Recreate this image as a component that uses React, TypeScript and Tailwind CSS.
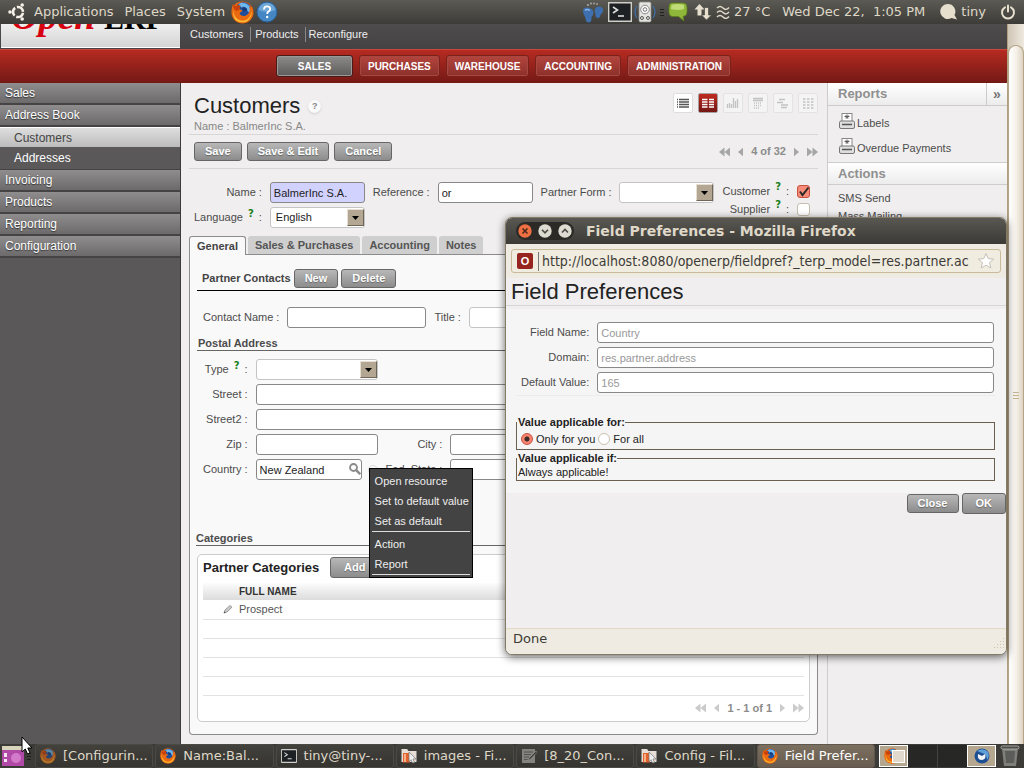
import React from "react";

const inputBase =
  "h-[21px] min-w-0 rounded-[3px] border border-[#888] bg-white px-[3px] text-[11px] text-[#222] outline-none";
const greyButton =
  "h-[19px] rounded-[3px] border border-[#666] bg-linear-to-b from-[#b8b8b8] to-[#8c8c8c] px-2.5 text-[11px] leading-[17px] font-bold text-white text-shadow-[0_1px_1px_#666] whitespace-nowrap";

function Firefox({ className = "size-4", dim = false }: { className?: string; dim?: boolean }) {
  return (
    <svg viewBox="0 0 24 24" className={`${className} shrink-0 ${dim ? "opacity-60" : ""}`} aria-hidden="true">
      <circle cx="12" cy="12" r="11.500" fill="#e8640f" />
      <circle cx="13" cy="9.500" r="8.200" fill="#1f4f9c" />
      <path d="M8 3 Q14 0 19 5 Q21 9 20 13 Q17 11 16 8 Q12 8 10 6 Z" fill="#6cb8ee" />
      <path d="M12 6 Q16 6 17 9 L14 11 Q11 9 12 6Z" fill="#163a78" />
      <path
        d="M2 3 Q3 5.500 5 5.500 Q7 4 10 5 Q8 7 9 8.500 Q11 8.500 12 10.500 Q9 11.500 9 13.500 Q11 16.500 15 15.500 Q19 13.500 19.500 9 L19 6 Q21 7 22 6 Q24 12 21.500 17 Q18 22 12 23 Q3 22 1 14 Q0 8 2 3Z"
        fill="#ea6a12"
      />
      <path d="M3 9 Q2 15 7 19 Q12 22 17 19 Q21 16 21.500 10 Q22.500 17 17 21 Q11 24 5 20 Q1 15 3 9Z" fill="#fcbc33" />
      <path d="M2 3 Q3 5.500 5 5.500 Q7 4 10 5 Q8 7 9 8.500 Q7 11 5 10 Q2 8 2 3Z" fill="#c9400b" />
    </svg>
  );
}

function UbuntuLogo() {
  return (
    <svg viewBox="0 0 18 18" className="size-[18px]" aria-hidden="true">
      <circle cx="10" cy="9" r="5" fill="none" stroke="#f5f1e8" strokeWidth="2.6" strokeDasharray="8.6 1.87" strokeDashoffset="-0.9" />
      <circle cx="2" cy="9" r="1.8" fill="#f5f1e8" />
      <circle cx="14.2" cy="2" r="1.8" fill="#f5f1e8" />
      <circle cx="14.2" cy="16" r="1.8" fill="#f5f1e8" />
    </svg>
  );
}

function HelpBall() {
  return (
    <svg viewBox="0 0 22 22" className="size-[22px]" aria-hidden="true">
      <circle cx="11" cy="11" r="10" fill="#4586c4" stroke="#2b5f96" />
      <path d="M2.5 9 A8.6 8.6 0 0 1 19.5 9 Q11 13 2.5 9Z" fill="#6ea6d8" />
      <path d="M8 8.4 Q8 5.4 11 5.4 Q14.2 5.4 14.2 8 Q14.2 9.6 12.4 10.6 Q11.2 11.4 11.2 13" fill="none" stroke="#fff" strokeWidth="1.8" />
      <circle cx="11.2" cy="16" r="1.2" fill="#fff" />
    </svg>
  );
}

function Feet() {
  return (
    <svg viewBox="0 0 22 22" className="size-[22px]" aria-hidden="true">
      <g fill="#3e6fae">
        <path d="M1 10 Q1 6.500 5 6.500 Q11 7 11.500 11 Q11.500 14 9.500 16 Q10 21.500 6.500 21.500 Q3.500 21 3.500 17 Q1 13 1 10Z" />
        <path d="M13 8 Q14 5 17 5.500 Q21.500 6 21 10 Q20.500 12 18.500 13.500 Q18 17.500 15.500 17 Q13 16.500 13.500 13 Q12 10 13 8Z" />
      </g>
      <path d="M3 9.500 Q5 7.500 8 9.500" stroke="#8db4e2" strokeWidth="1.500" fill="none" />
      <g fill="#a9a9a4">
        <circle cx="6" cy="4" r="1.1" /><circle cx="9" cy="2.500" r="1" /><circle cx="12" cy="2.500" r="0.900" /><circle cx="15" cy="3" r="0.900" />
      </g>
    </svg>
  );
}

function Terminal({ className = "h-5 w-6" }: { className?: string }) {
  return (
    <svg viewBox="0 0 24 20" className={`${className} shrink-0`} aria-hidden="true">
      <rect x="0.500" y="0.500" width="23" height="19" rx="1" fill="#1d2124" stroke="#cfcfca" strokeWidth="1.800" />
      <path d="M5 5 L9.500 8 L5 11" fill="none" stroke="#ddd" strokeWidth="1.600" />
      <path d="M10 14 H16" stroke="#ddd" strokeWidth="1.600" />
    </svg>
  );
}

function Disk() {
  return (
    <svg viewBox="0 0 22 22" className="size-[22px]" aria-hidden="true">
      <path d="M3 5 Q-1 11 3 17 M19 5 Q23 11 19 17" stroke="#3f6da5" strokeWidth="1.300" fill="none" />
      <rect x="5" y="1" width="12" height="20" rx="1.500" fill="#e4e4e0" stroke="#8c8c88" strokeWidth="0.800" />
      <circle cx="11" cy="8.500" r="4.300" fill="#f8f8f8" stroke="#888" />
      <circle cx="11" cy="8.500" r="1.800" fill="#fff" stroke="#777" />
      <circle cx="8" cy="17" r="1.500" fill="none" stroke="#555" /><circle cx="14" cy="17" r="1.500" fill="none" stroke="#555" />
    </svg>
  );
}

function Grip() {
  return (
    <span className="flex flex-col gap-0.5" aria-hidden="true">
      <i className="h-px w-1 bg-[#22211f]" /><i className="h-px w-1 bg-[#22211f]" /><i className="h-px w-1 bg-[#22211f]" />
    </span>
  );
}

function TopBar() {
  return (
    <header className="flex h-6 shrink-0 items-center bg-linear-to-b from-[#5b5a54] to-[#3d3c38] pr-2 pl-2 font-['DejaVu_Sans',sans-serif] text-[13px] whitespace-nowrap text-[#dfd8c8]">
      <UbuntuLogo />
      <nav className="ml-2 flex gap-[11px] leading-[22px]">
        <a href="#apps">Applications</a>
        <a href="#places">Places</a>
        <a href="#system">System</a>
      </nav>
      <span className="ml-1.5 flex items-center gap-0.5">
        <Firefox className="size-[23px]" />
        <HelpBall />
      </span>
      <div className="ml-auto flex items-center leading-[22px]">
        <Feet />
        <span className="ml-1 flex"><Terminal /></span>
        <span className="ml-0.5 flex"><Disk /></span>
        <span className="ml-1"><Grip /></span>
        <svg viewBox="0 0 20 20" className="ml-1 size-5" aria-hidden="true">
          <path d="M4 1 H15 Q19 1 19 5 V10 Q19 14 15 14.500 L16 19 L10.500 14.500 H4 Q1 14 1 10 V5 Q1 1 4 1Z" fill="#8fb83a" stroke="#5c7f1c" strokeWidth="0.800" />
          <path d="M3.500 3 Q10 1 16 3 V7 Q10 9 3 7Z" fill="#bfdc78" />
        </svg>
        <svg viewBox="0 0 18 18" className="ml-1.5 size-[18px]" aria-hidden="true">
          <path d="M5.500 1 L10.500 6.500 H7.500 V12.500 H3.500 V6.500 H0.500Z" fill="#e6dfce" />
          <path d="M12.500 17 L7.500 12 H10.500 V4.500 H14.500 V12 H17.500Z" fill="#e6dfce" stroke="#4c4b46" strokeWidth="0.700" />
        </svg>
        <svg viewBox="0 0 14 14" className="ml-1 size-3.5" fill="none" stroke="#dfd8c8" strokeWidth="1.500" aria-hidden="true">
          <path d="M1 3 Q4 0 7 3 T13 2.500 M1 7.500 Q4 4.500 7 7.500 T13 7 M1 12 Q4 9 7 12 T13 11.500" />
        </svg>
        <span className="ml-1">27 °C</span>
        <span className="ml-3 whitespace-pre">Wed Dec 22,  1:05 PM</span>
        <svg viewBox="0 0 18 18" className="ml-3.5 size-[18px]" aria-hidden="true">
          <path d="M8.500 1 A7.500 7.500 0 1 0 12.500 15 L18 16.500 L15.500 12 A7.500 7.500 0 0 0 8.500 1Z" fill="#e6dfce" />
        </svg>
        <span className="ml-1">tiny</span>
        <svg viewBox="0 0 16 16" className="ml-3.5 size-4" fill="none" stroke="#e6dfce" strokeWidth="2" strokeLinecap="round" aria-hidden="true">
          <path d="M5 3.300 A6 6 0 1 0 11 3.300 M8 1.500 V7.500" />
        </svg>
      </div>
    </header>
  );
}

function AppHeader() {
  return (
    <>
      <div className="flex h-[25px] shrink-0 bg-linear-to-b from-[#4e4c4d] to-[#444243]">
        <div className="ml-px h-[24px] w-[179px] overflow-hidden border-b border-white bg-linear-to-b from-[#efefef] to-[#d4d4d4] pl-2.5 font-['Liberation_Serif',serif]">
          <div className="-mt-[27px] flex items-baseline leading-[38px] font-bold">
            <span className="w-[93px] text-[38px] text-[#d8000f] italic">Open</span>
            <span className="text-[30px] text-black">ERP</span>
          </div>
        </div>
        <nav className="flex items-start pt-[3px] pl-0.5 text-[11px] leading-[15px] text-[#eee]">
          <a href="#customers" className="pr-[7px] pl-2">Customers</a>
          <a href="#products" className="border-l border-[#888] pr-1.5 pl-1">Products</a>
          <a href="#reconfigure" className="border-l border-[#888] px-[3px]">Reconfigure</a>
        </nav>
      </div>
      <nav className="flex h-[34px] shrink-0 items-start justify-center gap-1.5 border-t border-[#c9483d] bg-linear-to-b from-[#b62b21] to-[#741915] pt-[5px] text-[10px] font-bold text-white text-shadow-[0_1px_1px_#300]">
        <button className="h-[22px] w-[77px] rounded-[3px] border border-[#4b1a17] bg-linear-to-b from-[#8e8b8b] to-[#5e5b5b] inset-shadow-[0_0_0_1px_#999]">SALES</button>
        {["PURCHASES", "WAREHOUSE", "ACCOUNTING", "ADMINISTRATION"].map((t) => (
          <button key={t} className="h-[22px] rounded-[3px] border border-[#7b211c] bg-linear-to-b from-[#b3453d] to-[#8c302b] px-2 inset-shadow-[0_0_0_1px_#a84740]">
            {t}
          </button>
        ))}
      </nav>
    </>
  );
}

const menuItem =
  "flex h-[22px] items-center border-b-2 border-[#454344] bg-linear-to-b from-[#8f8d8e] to-[#6c6a6b] pl-[5px] text-white text-shadow-[0_1px_1px_#333]";

function Sidebar() {
  return (
    <nav className="flex w-[181px] shrink-0 flex-col border-r border-[#3c3a3b] bg-[#5a5859] text-[12px]">
      <a href="#sales" className={menuItem}>Sales</a>
      <a href="#book" className={menuItem}>Address Book</a>
      <a href="#customers" className="flex h-5 items-center border-t border-white bg-linear-to-b from-[#dedede] to-[#bcbcbc] pl-3.5 text-[#444]">Customers</a>
      <a href="#addresses" className="flex h-[23px] items-center border-b border-[#454344] pl-3.5 text-white">Addresses</a>
      {["Invoicing", "Products", "Reporting", "Configuration"].map((t) => (
        <a key={t} href={`#${t}`} className={menuItem}>{t}</a>
      ))}
    </nav>
  );
}

function Label({ htmlFor, children, help = false }: { htmlFor: string; children: React.ReactNode; help?: boolean }) {
  return (
    <label htmlFor={htmlFor} className="flex items-center justify-end gap-[3px] text-[11px] leading-[15px] whitespace-nowrap text-[#4c4c4c]">
      {children}
      {help && <span className="mx-0.5 pb-2 font-['DejaVu_Sans',sans-serif] text-[10px] leading-[10px] font-bold text-[#1a7f1a]">?</span>}
      <span>:</span>
    </label>
  );
}

function Select({ id, value = "", className = "" }: { id: string; value?: string; className?: string }) {
  return (
    <div className={`relative h-[21px] min-w-0 ${className}`}>
      <select id={id} defaultValue={value} className="block h-[21px] w-full appearance-none rounded-[3px] border border-[#c4c4c4] bg-white px-[5px] text-[11px] text-[#222]">
        <option>{value}</option>
      </select>
      <span className="pointer-events-none absolute top-0.5 right-px flex size-[17px] items-center justify-center border border-t-[#e6dfd2] border-r-[#6f6557] border-b-[#6f6557] border-l-[#e6dfd2] bg-[#b3a692]" aria-hidden="true">
        <svg viewBox="0 0 7 4" className="h-1 w-[7px]"><path d="M0 0 H7 L3.500 4Z" fill="#000" /></svg>
      </span>
    </div>
  );
}

function Check({ id, checked = false }: { id: string; checked?: boolean }) {
  return (
    <span className="relative size-[13px]">
      <input
        id={id}
        type="checkbox"
        defaultChecked={checked}
        className="peer block size-[13px] appearance-none rounded-[3px] border border-[#c4bcae] bg-white checked:border-[#c9503f] checked:bg-[#f58b78]"
      />
      <svg viewBox="0 0 13 13" className="pointer-events-none absolute inset-0 hidden size-[13px] peer-checked:block" aria-hidden="true">
        <path d="M3 6.500 L5.500 10 L11.500 2.500" fill="none" stroke="#2e2a28" strokeWidth="2" />
      </svg>
    </span>
  );
}

function Pager({ text, color, tone }: { text: string; color: string; tone: string }) {
  return (
    <div className={`flex items-center gap-2 text-[11px] font-bold ${tone}`}>
      <button aria-label="First"><svg viewBox="0 0 12 10" className="h-2.5 w-[11px]"><path d="M6 0 V10 L0 5Z M12 0 V10 L6 5Z" fill={color} /></svg></button>
      <button aria-label="Previous"><svg viewBox="0 0 6 10" className="h-2.5 w-[5px]"><path d="M6 0 V10 L0 5Z" fill={color} /></svg></button>
      <span>{text}</span>
      <button aria-label="Next"><svg viewBox="0 0 6 10" className="h-2.5 w-[5px]"><path d="M0 0 V10 L6 5Z" fill={color} /></svg></button>
      <button aria-label="Last"><svg viewBox="0 0 12 10" className="h-2.5 w-[11px]"><path d="M0 0 V10 L6 5Z M6 0 V10 L12 5Z" fill={color} /></svg></button>
    </div>
  );
}

const views = [
  { name: "List", d: "M4 5.500H5M6 5.500H16M4 8H5M6 8H16M4 10.500H5M6 10.500H16M4 13H5M6 13H16", c: "#555" },
  { name: "Form", d: "M4 5.500H9.500M11 5.500H16M4 8H9.500M11 8H16M4 10.500H9.500M11 10.500H16M4 13H9.500M11 13H16", c: "#fff" },
  { name: "Graph", d: "M4.500 14V10M6.500 14V9M8.500 14V10M10.500 14V4M12.500 14V7M14.500 14V5", c: "#c2c2c2" },
  { name: "Calendar", d: "M5 4.500H15M5 6.500H15M6 9H7M8 9H9M10 9H11M12 9H13M6 11.500H7M8 11.500H9M10 11.500H11M12 11.500H13M6 14H7M8 14H9M10 14H11", c: "#c2c2c2" },
  { name: "Gantt", d: "M6 5.500H12M4 8.500H9M9 8.500H10M8 11H15M8 13.500H14", c: "#c2c2c2" },
  { name: "Diagram", d: "M5 5H7.500M9 5H11.500M13 5H15.500M5 8H7.500M9 8H11.500M13 8H15.500M5 11H7.500M9 11H11.500M13 11H15.500M5 14H7.500M9 14H11.500M13 14H15.500", c: "#c2c2c2" },
];

function ViewButtons() {
  return (
    <div className="flex gap-[5px]">
      {views.map((v, i) => (
        <button
          key={v.name}
          aria-label={v.name}
          className={`size-5 rounded-[2px] border ${
            i === 1
              ? "border-[#a8a0a0] bg-linear-to-b from-[#c02b21] to-[#741713]"
              : i === 0
                ? "border-[#ddd] bg-white"
                : "border-[#e4e2e2] bg-[#f5f4f4]"
          }`}
        >
          <svg viewBox="1 0 18 18" className="size-[18px]">
            <path d={v.d} stroke={v.c} strokeWidth="1.300" fill="none" />
          </svg>
        </button>
      ))}
    </div>
  );
}

function ContextMenu() {
  return (
    <ul className="absolute top-[9px] left-[113px] z-10 w-[104px] border border-black bg-[#434343] px-0.5 pt-0.5 pb-0.5 text-[11px] leading-5 whitespace-nowrap text-[#eee]">
      <li className="px-[3px]">Open resource</li>
      <li className="px-[3px]">Set to default value</li>
      <li className="border-b border-[#ddd] px-[3px]">Set as default</li>
      <li className="mt-0.5 px-[3px]">Action</li>
      <li className="border-b border-[#ddd] px-[3px]">Report</li>
    </ul>
  );
}

function GeneralTab() {
  return (
    <section className="rounded-b-[4px] border border-t-0 border-[#8c8c8c] bg-[#f9f9f9] px-[7px] pt-3.5 pb-3">
      <div className="flex items-start gap-[3px] border-b border-black pb-[2px] pl-[5px]">
        <h2 className="text-[11px] leading-[19px] font-bold text-[#444]">Partner Contacts</h2>
        <button className={greyButton}>New</button>
        <button className={greyButton}>Delete</button>
      </div>

      <div className="mt-4 flex gap-2 pl-1.5">
        <Label htmlFor="contact">Contact Name</Label>
        <input id="contact" className={`${inputBase} w-[139px]`} />
        <Label htmlFor="title">Title</Label>
        <Select id="title" className="flex-1" />
      </div>

      <h3 className="mt-2 border-b border-[#666] pl-px text-[11px] leading-[14px] font-bold text-[#4c4c4c]">Postal Address</h3>
      <div className="mt-2 grid auto-rows-[21px] grid-cols-[auto_minmax(122px,1fr)_auto_3fr] gap-x-2 gap-y-1 pl-1.5">
        <Label htmlFor="type" help>Type</Label>
        <Select id="type" />
        <span className="col-span-2" />
        <Label htmlFor="street">Street</Label>
        <input id="street" className={`${inputBase} col-span-3`} />
        <Label htmlFor="street2">Street2</Label>
        <input id="street2" className={`${inputBase} col-span-3`} />
        <Label htmlFor="zip">Zip</Label>
        <input id="zip" className={inputBase} />
        <Label htmlFor="city">City</Label>
        <input id="city" className={inputBase} />
        <Label htmlFor="country">Country</Label>
        <div className="relative flex items-center gap-1.5">
          <div className="relative flex flex-1">
            <input id="country" defaultValue="New Zealand" className={`${inputBase} w-full`} />
            <svg viewBox="0 0 12 12" className="absolute top-1 right-px size-3" fill="none" stroke="#8a8a8a" aria-hidden="true">
              <circle cx="4.500" cy="4.500" r="3.500" strokeWidth="1.800" /><path d="M7.200 7.200 L11.200 11.200" strokeWidth="2.400" />
            </svg>
          </div>
          <i className="size-2.5 rounded-full border border-[#ddd]" />
          <ContextMenu />
        </div>
        <Label htmlFor="state">Fed. State</Label>
        <input id="state" className={inputBase} />
      </div>

      <h3 className="mt-[51px] -ml-px border-b border-[#666] text-[11px] leading-[14px] font-bold text-[#4c4c4c]">Categories</h3>
      <div className="mt-2 rounded-[5px] border border-[#ccc] bg-white px-[5px] pt-0.5">
        <div className="flex h-[21px] items-center">
          <h4 className="w-[127px] text-[13px] font-bold whitespace-nowrap text-[#222]">Partner Categories</h4>
          <button className={`${greyButton} h-[21px] px-[13px]`}>Add</button>
        </div>
        <table className="mt-[5px] w-full border-collapse text-left">
          <thead>
            <tr className="h-[17px] bg-linear-to-b from-[#fcfcfc] to-[#dcdcdc]">
              <th className="w-9 p-0" aria-label="Edit" />
              <th className="p-0 text-[10px] leading-[16px] font-bold text-[#333]">FULL NAME</th>
            </tr>
          </thead>
          <tbody className="text-[11px] leading-[18px] text-[#555]">
            <tr className="h-[19px] border-b border-[#e2e2e2]">
              <td className="p-0">
                <svg viewBox="0 0 10 10" className="ml-5 size-2.5" aria-label="Edit">
                  <path d="M1 9 L2 6 L7 1.500 L9 3.200 L4 8Z" fill="#c9c9c9" stroke="#8a8a8a" strokeWidth="0.800" />
                  <path d="M0.800 9.200 L1.300 7.500 L2.600 8.600Z" fill="#444" />
                </svg>
              </td>
              <td className="p-0">Prospect</td>
            </tr>
            {[1, 2, 3, 4].map((n) => (
              <tr key={n} className="h-[19px] border-b border-[#e2e2e2]"><td className="p-0" /><td className="p-0" /></tr>
            ))}
          </tbody>
        </table>
        <div className="flex h-[25px] items-center justify-end">
          <Pager text="1 - 1 of 1" color="#cbcbcb" tone="text-[#8c8c8c]" />
        </div>
      </div>
    </section>
  );
}

function MainForm() {
  return (
    <main className="min-w-0 flex-1 bg-[#f0eeee] pr-[9px] pb-2 pl-2">
      <div className="flex items-start justify-between pt-2.5 pl-[5px]">
        <div>
          <h1 className="flex items-center gap-2 text-[22px] leading-[26px] text-[#222]">
            Customers
            <span className="flex size-[13px] items-center justify-center rounded-full bg-[#fafafa] text-[9px] font-bold text-[#888] shadow-sm">?</span>
          </h1>
          <p className="text-[11px] leading-[15px] text-[#888]">Name : BalmerInc S.A.</p>
        </div>
        <ViewButtons />
      </div>
      <div className="flex h-[35px] items-center justify-between border-y border-[#d6d6d6] pl-[5px]">
        <div className="flex gap-[5px]">
          <button className={greyButton}>Save</button>
          <button className={greyButton}>Save &amp; Edit</button>
          <button className={greyButton}>Cancel</button>
        </div>
        <Pager text="4 of 32" color="#a6a6a6" tone="text-[#8c8c8c]" />
      </div>

      <div className="flex gap-2 pt-[13px] pr-2 pl-[5px]">
        <div className="grid min-w-0 flex-1 auto-rows-[21px] grid-cols-[auto_1fr_auto_1fr_auto_1fr] gap-x-2 gap-y-1">
          <Label htmlFor="name">Name</Label>
          <input id="name" defaultValue="BalmerInc S.A." className="h-[21px] min-w-0 rounded-[3px] border border-[#888] bg-[#d2d2ff] px-[3px] text-[11px] text-[#222]" />
          <Label htmlFor="ref">Reference</Label>
          <input id="ref" defaultValue="or" className={inputBase} />
          <Label htmlFor="form">Partner Form</Label>
          <Select id="form" />
          <Label htmlFor="lang" help>Language</Label>
          <Select id="lang" value="English" />
        </div>
        <div className="grid auto-rows-[18px] grid-cols-[auto_13px] content-start items-center gap-x-2">
          <Label htmlFor="cust" help>Customer</Label>
          <Check id="cust" checked />
          <Label htmlFor="supp" help>Supplier</Label>
          <Check id="supp" />
        </div>
      </div>

      <div className="mt-2 flex items-end text-[11px] font-bold text-[#555]" role="tablist">
        <button role="tab" aria-selected="true" className="h-[19px] rounded-t-[3px] border border-b-0 border-[#8c8c8c] bg-[#f9f9f9] px-[7px] text-[#444]">General</button>
        <div className="flex flex-1 gap-0.5 border-b border-[#8c8c8c] pl-0.5">
          {["Sales & Purchases", "Accounting", "Notes"].map((t) => (
            <button key={t} role="tab" aria-selected="false" className="h-[18px] rounded-t-[3px] bg-[#cfcfcf] px-[7px]">{t}</button>
          ))}
        </div>
      </div>
      <GeneralTab />
    </main>
  );
}

function Printer() {
  return (
    <svg viewBox="0 0 16 16" className="size-4 shrink-0" aria-hidden="true">
      <rect x="3" y="0.500" width="10" height="9" fill="#fff" stroke="#888" />
      <path d="M8 1.500 V6 M5.500 3.500 H10.500 M6.500 2.500 L9.500 5 M9.500 2.500 L6.500 5" stroke="#555" strokeWidth="0.900" />
      <rect x="0.500" y="8" width="15" height="7.500" rx="1.500" fill="#dedede" stroke="#777" />
      <path d="M3 11.500 H13" stroke="#555" strokeWidth="1.500" />
    </svg>
  );
}

function RightPanel() {
  const head = "flex h-[23px] items-center justify-between border-b border-[#ccc] bg-linear-to-b from-white to-[#ececec] pl-2.5 text-[13px] font-bold text-[#8f8f8f]";
  return (
    <aside className="w-[180px] shrink-0 border-l border-[#ccc] bg-[#f0eeee] text-[11px] text-[#4c4c4c]">
      <h2 className={head}>
        Reports
        <button className="h-full w-[21px] border-l border-[#ccc] text-[14px] leading-5 text-[#777]" aria-label="Collapse">»</button>
      </h2>
      <ul className="flex flex-col pt-0.5 pb-1 pl-[11px]">
        <li className="flex h-[25px] items-center gap-0.5"><Printer /><a href="#labels" className="pt-1.5">Labels</a></li>
        <li className="flex h-[25px] items-center gap-0.5"><Printer /><a href="#overdue" className="pt-1.5">Overdue Payments</a></li>
      </ul>
      <h2 className={`${head} border-t`}>Actions</h2>
      <ul className="pt-1 pl-2.5 leading-[18px]">
        <li><a href="#sms">SMS Send</a></li>
        <li><a href="#mail">Mass Mailing</a></li>
      </ul>
    </aside>
  );
}

function PrefRow({ id, label, value }: { id: string; label: string; value: string }) {
  return (
    <>
      <label htmlFor={id} className="self-center text-right text-[11px] text-[#4c4c4c]">{label}</label>
      <input id={id} defaultValue={value} className="h-[21px] min-w-0 rounded-[3px] border border-[#888] bg-white px-[3px] text-[11px] text-[#999]" />
    </>
  );
}

function Radio({ label, checked = false }: { label: string; checked?: boolean }) {
  return (
    <label className="flex items-center gap-[3px]">
      <input
        type="radio"
        name="scope"
        defaultChecked={checked}
        className="size-3 appearance-none rounded-full border border-[#c9c0b0] bg-white checked:border-[#c9503f] checked:bg-[radial-gradient(circle,#3a2a26_0_2px,#f58470_3px)]"
      />
      {label}
    </label>
  );
}

function PreferencesWindow() {
  return (
    <section className="absolute top-[217px] left-[505px] z-20 flex h-[438px] w-[502px] flex-col overflow-hidden rounded-[7px] border border-[#857a63] bg-[#f0eeee] shadow-[0_2px_8px_rgba(0,0,0,0.6)]">
      <header className="flex h-[26px] shrink-0 items-center bg-linear-to-b from-[#5a5852] to-[#3b3a36] pl-2.5 font-['DejaVu_Sans',sans-serif]">
        <div className="flex h-[18px] items-center gap-[6px] rounded-full bg-[#2b2a27] px-[2px]">
          <button aria-label="Close window">
            <svg viewBox="0 0 14 14" className="block size-3.5"><circle cx="7" cy="7" r="6.700" fill="#ee6f42" /><path d="M4.500 4.500 L9.500 9.500 M9.500 4.500 L4.500 9.500" stroke="#4b2a1c" strokeWidth="1.600" /></svg>
          </button>
          <button aria-label="Minimize">
            <svg viewBox="0 0 14 14" className="block size-3.5"><circle cx="7" cy="7" r="6.700" fill="#dedbd2" /><path d="M4 5.800 L7 8.800 L10 5.800" fill="none" stroke="#4b4a45" strokeWidth="1.600" /></svg>
          </button>
          <button aria-label="Maximize">
            <svg viewBox="0 0 14 14" className="block size-3.5"><circle cx="7" cy="7" r="6.700" fill="#dedbd2" /><path d="M4 8.500 L7 5.500 L10 8.500" fill="none" stroke="#4b4a45" strokeWidth="1.600" /></svg>
          </button>
        </div>
        <h2 className="ml-3 text-[14px] font-bold whitespace-nowrap text-[#dfd8c8]">Field Preferences - Mozilla Firefox</h2>
      </header>
      <div className="shrink-0 bg-[#efebe2] px-[5px] py-[5px]">
        <div className="flex h-6 items-center rounded-[3px] border border-[#c9bb98] bg-[#f1ece0] px-[5px]">
          <span className="flex size-4 items-center justify-center rounded-[2px] bg-[#97251f] text-[11px] font-bold text-white">O</span>
          <input
            aria-label="Address"
            defaultValue="http://localhost:8080/openerp/fieldpref?_terp_model=res.partner.ac"
            className="ml-[5px] h-[19px] min-w-0 flex-1 border-l border-[#777] bg-transparent pl-[3px] font-['DejaVu_Sans_Condensed','DejaVu_Sans',sans-serif] text-[14px] text-[#3c3b37] outline-none"
          />
          <svg viewBox="0 0 18 18" className="ml-0.5 size-[18px]" aria-hidden="true">
            <path d="M9 1.500 L11.200 6.600 L16.600 7.100 L12.500 10.700 L13.800 16 L9 13.200 L4.200 16 L5.500 10.700 L1.400 7.100 L6.800 6.600Z" fill="#fff" stroke="#c4c0b8" />
          </svg>
        </div>
      </div>
      <h1 className="shrink-0 border-b border-[#d6d6d6] pl-[5px] text-[22px] leading-[27px] text-[#222]">Field Preferences</h1>
      <form className="mt-[3px] shrink-0 bg-[#f6f5f5] pt-[13px] pr-[11px] pb-3 pl-2.5">
        <div className="grid grid-cols-[auto_1fr] gap-x-2 gap-y-1 border-b border-[#ececec] pr-px pb-0.5 pl-[5px]">
          <PrefRow id="pf-name" label="Field Name:" value="Country" />
          <PrefRow id="pf-domain" label="Domain:" value="res.partner.address" />
          <PrefRow id="pf-default" label="Default Value:" value="165" />
        </div>
        <fieldset className="mt-5 border border-[#6b5f50] text-[11px] text-[#222]">
          <legend className="pl-px leading-[13px] font-bold">Value applicable for:</legend>
          <div className="flex h-5 items-center gap-[3px] pl-1">
            <Radio label="Only for you" checked />
            <Radio label="For all" />
          </div>
        </fieldset>
        <fieldset className="mt-0.5 border border-[#6b5f50] text-[11px] text-[#222]">
          <legend className="pl-px leading-[13px] font-bold">Value applicable if:</legend>
          <p className="pl-px leading-[15px]">Always applicable!</p>
        </fieldset>
      </form>
      <div className="flex items-center justify-end gap-[3px]">
        <button className={greyButton}>Close</button>
        <button className={`${greyButton} h-[21px] px-[13px]`}>OK</button>
      </div>
      <footer className="mt-auto flex h-[26px] shrink-0 items-center border-t border-[#e3d8c3] bg-[#efebe2] pb-1.5 pl-[7px] font-['DejaVu_Sans',sans-serif] text-[13px] text-[#3c3b37]">
        Done
        <svg viewBox="0 0 12 12" className="mt-2 mr-px ml-auto size-3" fill="#cfc5ae" aria-hidden="true">
          <path d="M10 1h1v1h-1zM7 4h1v1h-1zM10 4h1v1h-1zM4 7h1v1h-1zM7 7h1v1h-1zM10 7h1v1h-1zM1 10h1v1h-1zM4 10h1v1h-1zM7 10h1v1h-1zM10 10h1v1h-1z" />
        </svg>
      </footer>
    </section>
  );
}

function Folder() {
  return (
    <svg viewBox="0 0 16 16" className="size-4 shrink-0" aria-hidden="true">
      <path d="M0.500 1 H6 L7.500 3 H15.500 V14 H0.500Z" fill="#e6ded6" />
      <path d="M2 5 H9 V14.500 H2Z" fill="#e4622c" /><path d="M3 6 H5 V14 H3Z" fill="#f6b08a" />
      <path d="M8 4 L15 11 H12 L13.500 14.500 L11.500 15 L10.200 11.800 L8 13.500Z" fill="#efefef" stroke="#777" strokeWidth="0.700" />
    </svg>
  );
}

function Note() {
  return (
    <svg viewBox="0 0 16 16" className="size-4 shrink-0" aria-hidden="true">
      <rect x="1" y="1" width="13" height="14" fill="#83827d" />
      <path d="M3 4 H12 M3 6.500 H10 M3 9 H8 M3 11.500 H7" stroke="#555450" />
      <path d="M15 3 L8 10 L6.500 12.500 L9.300 11.300 L16 4.500Z" fill="#3c3b37" stroke="#aaa" strokeWidth="0.500" />
    </svg>
  );
}

function Taskbar() {
  const tasks = [
    { t: "[Configurin...", icon: <Firefox dim /> },
    { t: "Name:Bal...", icon: <Firefox /> },
    { t: "tiny@tiny-...", icon: <Terminal className="h-3.5 w-4" /> },
    { t: "images - Fi...", icon: <Folder /> },
    { t: "[8_20_Con...", icon: <Note /> },
    { t: "Config - Fil...", icon: <Folder /> },
    { t: "Field Prefer...", icon: <Firefox /> },
  ];
  return (
    <footer className="relative flex h-6 shrink-0 items-center bg-[#3c3b37] font-['DejaVu_Sans',sans-serif] text-[13px] text-[#dfd8c8]">
      <svg viewBox="0 0 22 22" className="ml-0.5 size-[22px]" aria-hidden="true">
        <rect y="1" width="22" height="20" fill="#b04aa6" /><rect y="1" width="22" height="4" fill="#d9d5bd" />
        <circle cx="14" cy="13" r="5" fill="#d47acb" /><rect x="2" y="8" width="3" height="4" fill="#f3e6f1" /><rect x="2" y="14" width="3" height="3" fill="#f3e6f1" />
      </svg>
      <span className="ml-[3px]"><Grip /></span>
      <div className="ml-1 grid h-full min-w-0 flex-1 grid-cols-7">
        {tasks.map((k, i) => (
          <button
            key={k.t}
            className={`mr-0.5 flex min-w-0 items-center gap-[7px] overflow-hidden rounded-[3px] border pl-1 leading-[22px] whitespace-nowrap ${
              i === 6
                ? "border-[#5f574c] bg-linear-to-b from-[#7b6f60] to-[#675c4f] text-white"
                : "border-[#4a4944] bg-linear-to-b from-[#42413c] to-[#353430]"
            }`}
          >
            {k.icon}
            {k.t}
          </button>
        ))}
      </div>
      <div className="ml-0.5 flex h-[22px]">
        <span className="flex w-[29px] items-center border border-white bg-[#b5a78f] pl-1">
          <Firefox />
          <i className="-ml-2 size-[13px] shrink-0 border border-white bg-[#e2d9cd]" />
        </span>
        <span className="w-[30px] border-r border-[#444] bg-[#272725]" />
        <span className="w-[29px] bg-[#272725]" />
        <span className="flex w-[29px] items-center justify-center border border-white bg-[#b5a78f]">
          <svg viewBox="0 0 16 16" className="size-4" aria-hidden="true">
            <circle cx="8" cy="8" r="7.500" fill="#1e4f93" /><path d="M3 3 Q9 -1 14 4 Q16 9 13 12 Q13 6 8 5Z" fill="#5f9fd8" />
            <path d="M4 6 L8 8 L11 6 Q13 11 8 12 Q3 12 4 6Z" fill="#f2f4f7" />
          </svg>
        </span>
      </div>
      <svg viewBox="0 0 20 22" className="mr-1 ml-1 h-[22px] w-5" aria-hidden="true">
        <path d="M2 3 H18 L16 21 H4Z" fill="#7f807c" /><path d="M5 6 H15 L14 18 H6Z" fill="#5c5d5a" />
        <rect x="1" y="1" width="18" height="3" rx="1.500" fill="#4c4d4a" stroke="#a8a9a5" />
      </svg>
      <svg viewBox="0 0 12 19" className="absolute -top-2 left-[21px] z-30 h-[19px] w-3" aria-hidden="true">
        <path d="M1 1 V16 L4.300 13 L6.500 18 L9 17 L6.800 12 H11Z" fill="#fff" stroke="#000" />
      </svg>
    </footer>
  );
}

export default function App() {
  return (
    <div className="relative flex min-h-screen flex-col overflow-hidden bg-[#f0eeee] font-['Liberation_Sans',Arial,sans-serif]">
      <TopBar />
      <div className="flex flex-1">
        <div className="flex min-w-0 flex-1 flex-col">
          <AppHeader />
          <div className="flex flex-1">
            <Sidebar />
            <MainForm />
            <RightPanel />
          </div>
        </div>
        <div className="flex w-[17px] shrink-0 flex-col border-l border-[#b0a080] bg-linear-to-r from-[#cfc6b6] to-[#efe9df] pt-[21px]" aria-hidden="true">
          <div className="flex flex-1 items-center justify-center rounded-t-[8px] border border-b-0 border-[#b5a486] bg-linear-to-r from-white via-[#f6f2ea] to-[#ddd3c2]">
            <span className="flex flex-col gap-0.5">
              <i className="h-px w-1.5 bg-[#c4b594]" /><i className="h-px w-1.5 bg-[#c4b594]" /><i className="h-px w-1.5 bg-[#c4b594]" />
            </span>
          </div>
        </div>
      </div>
      <Taskbar />
      <PreferencesWindow />
    </div>
  );
}
